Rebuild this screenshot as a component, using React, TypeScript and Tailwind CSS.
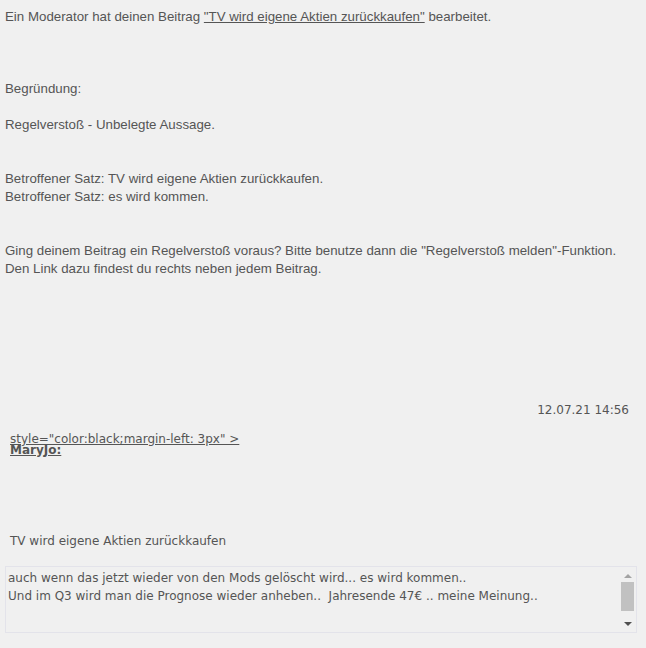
import React from "react"

const arial = { fontFamily: '"Liberation Sans", Arial, sans-serif' }
const tahoma = { fontFamily: '"DejaVu Sans", Tahoma, Verdana, sans-serif' }

export default function App() {
  return (
    <div className="min-h-[648px] w-[646px] bg-[#f0f0f0] text-[#555] overflow-hidden">
      <div className="px-[5px] pt-[8px] text-[13.3px] leading-[18px]" style={arial}>
        <p>
          Ein Moderator hat deinen Beitrag{" "}
          <a className="underline text-[#555]" href="#">"TV wird eigene Aktien zurückkaufen"</a>{" "}
          bearbeitet.
        </p>
        <p className="mt-[54px]">Begründung:</p>
        <p className="mt-[18px]">Regelverstoß - Unbelegte Aussage.</p>
        <p className="mt-[36px]">Betroffener Satz: TV wird eigene Aktien zurückkaufen.</p>
        <p>Betroffener Satz: es wird kommen.</p>
        <p className="mt-[36px]">
          Ging deinem Beitrag ein Regelverstoß voraus? Bitte benutze dann die "Regelverstoß melden"-Funktion.
        </p>
        <p>Den Link dazu findest du rechts neben jedem Beitrag.</p>
      </div>

      <div className="text-[12px]" style={tahoma}>
        <div className="mt-[123px] flex justify-end pr-[17px] leading-[18px]">12.07.21 14:56</div>
        <div className="mt-[15px] pl-[10px] leading-[10px]">
          <a className="underline text-[#555]" href="#">style="color:black;margin-left: 3px" &gt;</a>
          <div className="font-bold underline leading-[13px]">MaryJo:</div>
        </div>
        <div className="mt-[75px] pl-[10px] leading-[18px]">TV wird eigene Aktien zurückkaufen</div>
        <div className="mt-[16px] ml-[5px] mr-[9px] h-[67px] border border-[#e3e3ea] bg-[#f0f0f0] flex">
          <div className="flex-1 pl-[2px] pt-[2px] leading-[18px] whitespace-pre text-[#555]">
            {"auch wenn das jetzt wieder von den Mods gelöscht wird... es wird kommen..\nUnd im Q3 wird man die Prognose wieder anheben..  Jahresende 47€ .. meine Meinung.."}
          </div>
          <div className="w-[17px] flex flex-col items-center py-[2px]">
            <div className="h-[13px] flex items-center justify-center">
              <div className="w-0 h-0 border-l-[4px] border-r-[4px] border-b-[4px] border-l-transparent border-r-transparent border-b-[#a3a3a3]" />
            </div>
            <div className="w-[13px] h-[29px] bg-[#c1c1c1]" />
            <div className="flex-1" />
            <div className="h-[13px] flex items-center justify-center">
              <div className="w-0 h-0 border-l-[4px] border-r-[4px] border-t-[4px] border-l-transparent border-r-transparent border-t-[#505050]" />
            </div>
          </div>
        </div>
      </div>
    </div>
  )
}
